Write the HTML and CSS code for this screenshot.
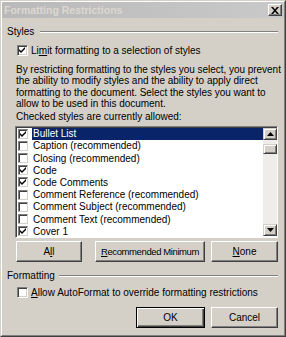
FILE: index.html
```html
<!DOCTYPE html>
<html lang="en">
<head>
    <meta charset="UTF-8">
    <title>Formatting Restrictions</title>
    <link rel="stylesheet" href="styles.css">
</head>
<body>
    <div class="dialog">
        <div class="frame">
            <div class="titlebar">
                <span class="title">Formatting Restrictions</span>
                <span class="close">
                    <svg width="8" height="7" viewBox="0 0 8 7"><path d="M0 0h2l2 2.2L6 0h2L5 3.5 8 7H6L4 4.8 2 7H0l3-3.5z" fill="#000"/></svg>
                </span>
            </div>

            <div class="content">
                <div class="group-head"><span>Styles</span><div class="rule"></div></div>

                <div class="check-row first">
                    <span class="box"><svg class="tick" width="7" height="7" viewBox="0 0 7 7"><path d="M0 2l2 2 4-4v2L2 6 0 4z" fill="#000"/></svg></span>
                    <span>Li<u>m</u>it formatting to a selection of styles</span>
                </div>

                <p class="intro">
                    <span>By restricting formatting to the styles you select, you prevent</span>
                    <span>the ability to modify styles and the ability to apply direct</span>
                    <span>formatting to the document. Select the styles you want to</span>
                    <span>allow to be used in this document.</span>
                </p>
                <p class="list-label">Checked styles are currently allowed:</p>

                <div class="listbox">
                    <ul class="items">
                        <li class="selected"><span class="mini on"><svg width="7" height="7" viewBox="0 0 7 7"><path d="M0 2l2 2 4-4v2L2 6 0 4z" fill="#000"/></svg></span><span class="name">Bullet List</span></li>
                        <li><span class="mini"></span><span class="name">Caption (recommended)</span></li>
                        <li><span class="mini"></span><span class="name">Closing (recommended)</span></li>
                        <li><span class="mini on"><svg width="7" height="7" viewBox="0 0 7 7"><path d="M0 2l2 2 4-4v2L2 6 0 4z" fill="#000"/></svg></span><span class="name">Code</span></li>
                        <li><span class="mini on"><svg width="7" height="7" viewBox="0 0 7 7"><path d="M0 2l2 2 4-4v2L2 6 0 4z" fill="#000"/></svg></span><span class="name">Code Comments</span></li>
                        <li><span class="mini"></span><span class="name">Comment Reference (recommended)</span></li>
                        <li><span class="mini"></span><span class="name">Comment Subject (recommended)</span></li>
                        <li><span class="mini"></span><span class="name">Comment Text (recommended)</span></li>
                        <li><span class="mini on"><svg width="7" height="7" viewBox="0 0 7 7"><path d="M0 2l2 2 4-4v2L2 6 0 4z" fill="#000"/></svg></span><span class="name">Cover 1</span></li>
                    </ul>
                    <div class="scrollbar">
                        <div class="arrow"><svg width="7" height="4" viewBox="0 0 7 4"><path d="M3.5 0L7 4H0z" fill="#000"/></svg></div>
                        <div class="track">
                            <div class="thumb"></div>
                        </div>
                        <div class="arrow"><svg width="7" height="4" viewBox="0 0 7 4"><path d="M0 0h7L3.5 4z" fill="#000"/></svg></div>
                    </div>
                </div>

                <div class="btn-row">
                    <div class="btn all">A<u>l</u>l</div>
                    <div class="btn recommended"><u>R</u>ecommended Minimum</div>
                    <div class="btn none"><u>N</u>one</div>
                </div>

                <div class="group-head second"><span>Formatting</span><div class="rule"></div></div>

                <div class="check-row autoformat">
                    <span class="box"></span>
                    <span><u>A</u>llow AutoFormat to override formatting restrictions</span>
                </div>

                <div class="btn-row footer">
                    <div class="btn ok default">OK</div>
                    <div class="btn cancel">Cancel</div>
                </div>
            </div>
        </div>
    </div>
</body>
</html>
```

FILE: styles.css
```css
* {
    box-sizing: border-box;
}

body {
    margin: 0;
    background: #d4d0c8;
    font-family: "Liberation Sans", Arial, sans-serif;
    font-size: 10px;
    color: #000;
}

.dialog {
    width: 286px;
    height: 337px;
    background: #d4d0c8;
    border: 1px solid;
    border-color: #d4d0c8 #404040 #404040 #d4d0c8;
}

.frame {
    height: 100%;
    border: 1px solid;
    border-color: #fff #808080 #808080 #fff;
}

.titlebar {
    height: 16px;
    display: flex;
    align-items: center;
    justify-content: space-between;
    padding: 0 2px 0 2px;
    background: linear-gradient(to right, #b9b9b9, #c9c9c9);
}

.title {
    font-weight: bold;
    font-size: 10.5px;
    color: #dcd8d0;
}

.close {
    width: 14px;
    height: 12px;
    display: flex;
    align-items: center;
    justify-content: center;
    background: #d4d0c8;
    border: 1px solid;
    border-color: #fff #404040 #404040 #fff;
    box-shadow: inset -1px -1px #808080;
}

.content {
    padding: 8px 6px 0 5px;
}

.group-head {
    display: flex;
    align-items: center;
    height: 12px;
    line-height: 12px;
}

.group-head .rule {
    flex: 1;
    height: 2px;
    margin-left: 6px;
    border-top: 1px solid #808080;
    border-bottom: 1px solid #fff;
}

.group-head.second {
    margin-top: 8px;
}

.group-head.second .rule {
    margin-left: 4px;
}

.check-row {
    display: flex;
    align-items: center;
    height: 12px;
    margin-left: 10px;
    margin-top: 6px;
    white-space: nowrap;
}

.check-row.autoformat {
    margin-top: 5px;
}

.box {
    width: 11px;
    height: 11px;
    margin-right: 3px;
    display: flex;
    align-items: center;
    justify-content: center;
    background: #fff;
    border: 1px solid;
    border-color: #808080 #fff #fff #808080;
    box-shadow: inset 1px 1px #404040, inset -1px -1px #d4d0c8;
}

.intro {
    margin: 8px 0 0 9px;
    line-height: 11.4px;
    letter-spacing: -0.03px;
}

.intro span {
    display: block;
    white-space: nowrap;
}

.list-label {
    margin: 1px 0 0 9px;
    line-height: 12px;
}

.listbox {
    display: flex;
    margin: 3px 0 0 8px;
    height: 112px;
    background: #fff;
    border: 1px solid;
    border-color: #808080 #fff #fff #808080;
    box-shadow: inset 1px 1px #404040;
    padding: 1px 0 0 1px;
    overflow: hidden;
}

.items {
    flex: 1;
    list-style: none;
    margin: 0;
    padding: 0;
}

.items li {
    display: flex;
    align-items: center;
    height: 12.2px;
    white-space: nowrap;
}

.mini {
    width: 10px;
    height: 10px;
    margin: 0 4px 0 1px;
    display: flex;
    align-items: center;
    justify-content: center;
    border: 1px solid;
    border-color: #808080 #d4d0c8 #d4d0c8 #808080;
    box-shadow: inset 1px 1px #404040;
}

.mini svg {
    margin: 1px 0 0 1px;
}

.name {
    flex: 1;
    height: 100%;
    display: flex;
    align-items: center;
    padding-left: 1px;
}

.selected .name {
    background: #0a246a;
    color: #fff;
}

.scrollbar {
    width: 14px;
    display: flex;
    flex-direction: column;
    margin-bottom: 1px;
}

.arrow {
    height: 12px;
    display: flex;
    align-items: center;
    justify-content: center;
    background: #d4d0c8;
    border: 1px solid;
    border-color: #d4d0c8 #404040 #404040 #d4d0c8;
    box-shadow: inset 1px 1px #fff, inset -1px -1px #808080;
}

.track {
    flex: 1;
    background: #eeede9;
    padding-top: 4px;
}

.thumb {
    height: 10px;
    background: #d4d0c8;
    border: 1px solid;
    border-color: #d4d0c8 #404040 #404040 #d4d0c8;
    box-shadow: inset 1px 1px #fff, inset -1px -1px #808080;
}

.btn-row {
    display: flex;
    margin-top: 3px;
    margin-left: 9px;
}

.btn {
    height: 21px;
    display: flex;
    align-items: center;
    justify-content: center;
    background: #d4d0c8;
    border: 1px solid;
    border-color: #fff #404040 #404040 #fff;
    box-shadow: inset -1px -1px #808080;
    white-space: nowrap;
}

.all {
    width: 66px;
}

.recommended {
    width: 110px;
    margin-left: 13px;
    font-size: 9.5px;
    letter-spacing: -0.4px;
}

.none {
    width: 67px;
    margin-left: 6px;
}

.footer {
    margin-top: 8px;
    justify-content: flex-end;
}

.ok {
    width: 69px;
}

.default {
    border: 1px solid #000;
    box-shadow: inset 1px 1px #fff, inset -1px -1px #404040, inset -2px -2px #808080;
}

.cancel {
    width: 67px;
    margin-left: 6px;
}
```
